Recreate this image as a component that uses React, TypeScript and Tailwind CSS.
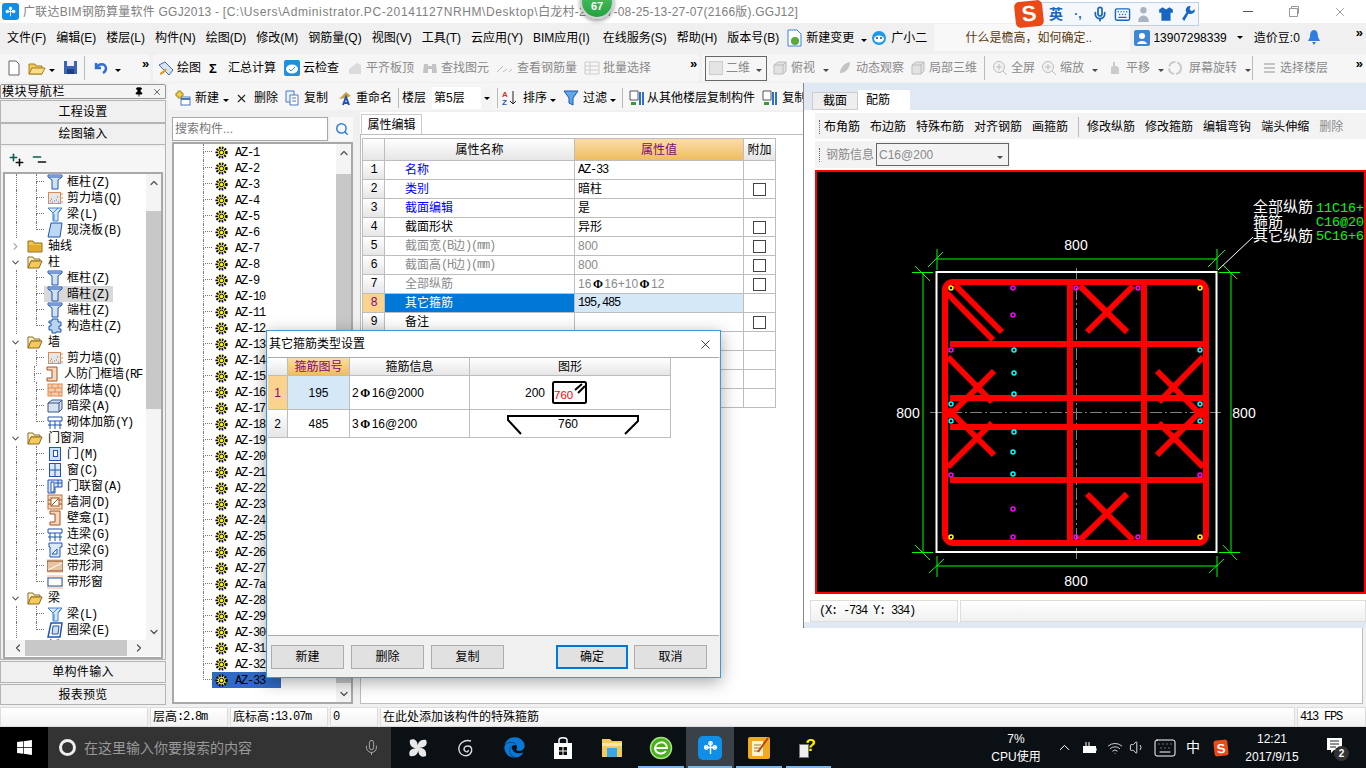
import type { ReactNode } from "react"
import { FaEdge, FaWindows } from "react-icons/fa"
import { ChevronDown, ChevronLeft, ChevronRight, ChevronUp, Keyboard, Mic, Minus, Pin, Plus, Search, Volume1, Wifi, X } from "lucide-react"

function Sim({ t }: { t: string }) {
  const parts = t.split(/([\x00-\x7f]+)/).filter(Boolean)
  return (
    <>
      {parts.map((p, i) =>
        /^[\x00-\x7f]+$/.test(p) ? (
          <span key={i} className="font-['Liberation_Mono'] tracking-[-1.2px]">{p}</span>
        ) : (
          <span key={i}>{p}</span>
        ),
      )}
    </>
  )
}

function Ico({ children, w = 16, h = 16 }: { children: ReactNode; w?: number; h?: number }) {
  return (
    <svg width={w} height={h} viewBox={`0 0 ${w} ${h}`} className="shrink-0">
      {children}
    </svg>
  )
}

function Tri() {
  return <span className="inline-block h-0 w-0 shrink-0 border-x-[3px] border-t-[3px] border-x-transparent border-t-black" />
}

function More({ className }: { className: string }) {
  return <span className={`text-[13px] leading-none font-bold text-black ${className}`}>»</span>
}

const blue = "#1f55b5"
const Column = () => <Ico><path d="M1 1h14v2l-4 3v9H5V6L1 3z" fill="#cfe2fa" stroke={blue} /><path d="M2 3h12" stroke={blue} /></Ico>
const Wall = () => <Ico><rect x="1.5" y="2.5" width="12" height="11" fill="#e6e6e6" stroke="#e08a50" /><path d="M4 9h1M7 11h1M10 7h1M5 12h1M9 10h1M11 12h1M3 11h1" stroke="#777" /><path d="M14 4h2M14 8h2M14 12h2" stroke="#e08a50" /></Ico>
const Beam = () => <Ico><path d="M1 2h14l-4 5v8H6V7z" fill="#d7e8fb" stroke="#3b83d9" /><path d="M11 2 6 7M14 3l-3 4M7 8v6" stroke="#3b83d9" /></Ico>
const Plate = () => <Ico><path d="M4 1h11l-2 14H1z" fill="#bcd8f5" stroke={blue} /></Ico>
const Struct = () => <Ico><path d="M5 1h6v3h3v4h-2v3h2v3H9v1H5v-3H2V8h2V5H2V3h3z" fill="#b9d3f3" stroke={blue} /></Ico>
const Niche = () => <Ico><path d="M3 1h10v14H3v-3h5V4H3z" fill="#f7d9bd" stroke="#a5501e" /></Ico>
const Brick = () => <Ico><rect x="1" y="2" width="14" height="12" fill="#f7cfae" stroke="#e08a50" /><path d="M1 6h14M1 10h14M5 2v4M11 2v4M8 6v4M4 10v4M12 10v4" stroke="#e08a50" /></Ico>
const Hidden = () => <Ico><path d="M1 5l4-3h10v9l-3 3H1z" fill="#d6e2ee" stroke="#37558a" /><path d="M1 5h11v9M12 5l3-3" stroke="#37558a" fill="none" /></Ico>
const Bars = () => <Ico><path d="M1 3h14v4H1z" fill="#fff" stroke={blue} /><path d="M3 7v8M8 7v8M13 7v8M1 11h14" stroke={blue} /></Ico>
const Door = () => <Ico><rect x="2.5" y="1.5" width="11" height="13" fill="#cfe2fa" stroke={blue} /><rect x="6.5" y="4.5" width="4" height="6" fill="#fff" stroke={blue} /></Ico>
const Win = () => <Ico><rect x="2.5" y="1.5" width="11" height="13" fill="#dbe9fb" stroke={blue} /><path d="M8 2v12M3 8h10" stroke={blue} /></Ico>
const DoorWin = () => <Ico><path d="M1 2h14v7H8v6H1z" fill="#dbe9fb" stroke={blue} /><path d="M4 4h3v10H4zM11 2v7M8 5h7" stroke={blue} fill="#fff" /></Ico>
const Hole = () => <Ico><rect x="1" y="1" width="14" height="14" fill="#f7d9bd" stroke="#c0703a" /><rect x="4" y="4" width="8" height="8" fill="#fff" stroke="#a5501e" /><path d="M4 12l8-8M1 6h3M12 6h3M1 10h3M12 10h3" stroke="#a5501e" /></Ico>
const Lintel = () => <Ico><path d="M2 1h13v4h-2v10H3V5H2z" fill="#dbe9fb" stroke={blue} /><path d="M5 12l5-5v5z" fill="#fff" stroke={blue} /></Ico>
const Strip = () => <Ico><rect x="0" y="1" width="16" height="14" fill="#f7d9bd" /><rect x="0" y="3" width="16" height="10" fill="#e8c3a3" stroke="#8a4a20" /><path d="M1 12 15 5" stroke="#fff" /></Ico>
const StripWin = () => <Ico><rect x="0" y="1" width="16" height="14" fill="#f9dcc8" /><rect x="1" y="4" width="14" height="8" fill="#fff" stroke={blue} /></Ico>
const RingBeam = () => <Ico><path d="M4 1h11l-2 14H1z" fill="#fff" stroke={blue} strokeWidth="1.5" /><path d="M6 4h6l-1 8H5z" fill="#cfe2fa" stroke={blue} /></Ico>
const FolderShut = () => <Ico><path d="M1 3h5l1 2h8v9H1z" fill="#f0c64d" stroke="#8d6d1e" /><path d="M2 7h12v6H2z" fill="#e2a92b" /></Ico>
const FolderOpen = () => <Ico><path d="M1 3h5l1 2h6v2H4l-3 7z" fill="#fff4cf" stroke="#8d6d1e" /><path d="M4 7h11l-3 7H1z" fill="#f3c95a" stroke="#8d6d1e" /></Ico>
const Gear = () => <Ico w={13} h={13}><circle cx="6.5" cy="6.5" r="4.8" fill="#ffff00" stroke="#000" strokeWidth="2.6" strokeDasharray="1.6 1.2" /><circle cx="6.5" cy="6.5" r="2.2" fill="#ffff00" stroke="#000" /></Ico>
const AppCross = ({ s = 11 }: { s?: number }) => (
  <svg width={s} height={s} viewBox="0 0 16 16" fill="none" stroke="#fff" strokeWidth="1.5">
    <path d="M8 1v14M1 8h14" /><circle cx="8" cy="3.5" r="1.8" /><circle cx="3.5" cy="8" r="1.8" /><circle cx="12.5" cy="8" r="1.8" />
  </svg>
)

type TreeRow = { t: string; icon?: ReactNode; folder?: "open" | "shut"; last?: boolean; sel?: boolean }
const tree: TreeRow[] = [
  { t: "框柱(Z)", icon: <Column /> },
  { t: "剪力墙(Q)", icon: <Wall /> },
  { t: "梁(L)", icon: <Beam /> },
  { t: "现浇板(B)", icon: <Plate />, last: true },
  { t: "轴线", folder: "shut" },
  { t: "柱", folder: "open" },
  { t: "框柱(Z)", icon: <Column /> },
  { t: "暗柱(Z)", icon: <Column />, sel: true },
  { t: "端柱(Z)", icon: <Column /> },
  { t: "构造柱(Z)", icon: <Struct />, last: true },
  { t: "墙", folder: "open" },
  { t: "剪力墙(Q)", icon: <Wall /> },
  { t: "人防门框墙(RF", icon: <Niche /> },
  { t: "砌体墙(Q)", icon: <Brick /> },
  { t: "暗梁(A)", icon: <Hidden /> },
  { t: "砌体加筋(Y)", icon: <Bars />, last: true },
  { t: "门窗洞", folder: "open" },
  { t: "门(M)", icon: <Door /> },
  { t: "窗(C)", icon: <Win /> },
  { t: "门联窗(A)", icon: <DoorWin /> },
  { t: "墙洞(D)", icon: <Hole /> },
  { t: "壁龛(I)", icon: <Niche /> },
  { t: "连梁(G)", icon: <Bars /> },
  { t: "过梁(G)", icon: <Lintel /> },
  { t: "带形洞", icon: <Strip /> },
  { t: "带形窗", icon: <StripWin />, last: true },
  { t: "梁", folder: "open" },
  { t: "梁(L)", icon: <Beam /> },
  { t: "圈梁(E)", icon: <RingBeam />, last: true },
  { t: "板", folder: "open" },
]

const azList = [
  "AZ-1", "AZ-2", "AZ-3", "AZ-4", "AZ-5", "AZ-6", "AZ-7", "AZ-8", "AZ-9", "AZ-10", "AZ-11", "AZ-12",
  "AZ-13", "AZ-14", "AZ-15", "AZ-16", "AZ-17", "AZ-18", "AZ-19", "AZ-20", "AZ-21", "AZ-22", "AZ-23",
  "AZ-24", "AZ-25", "AZ-26", "AZ-27", "AZ-7a", "AZ-28", "AZ-29", "AZ-30", "AZ-31", "AZ-32", "AZ-33",
]

function TitleBar() {
  return (
    <div className="flex h-[23px] shrink-0 items-center bg-white pl-[2px] text-[12px] text-[#808080]">
      <span className="flex h-[17px] w-[17px] items-center justify-center rounded-[3px] bg-[#0f8fe8]"><AppCross /></span>
      <span className="ml-[4px] whitespace-pre tracking-[0.22px]">广联达BIM钢筋算量软件 GGJ2013 - </span>
      <span className="whitespace-pre tracking-[0.6px]">[C:\Users\Administrator.PC-20141127NRHM\Desktop\</span>
      <span className="whitespace-pre tracking-[0.22px]">白龙村-2#017-08-25-13-27-07(2166版).GGJ12]</span>
      <svg width="11" height="11" viewBox="0 0 11 11" className="ml-auto mr-[34px]" stroke="#555" fill="none"><path d="M0 5.5h10" /></svg>
      <svg width="11" height="11" viewBox="0 0 11 11" className="mr-[34px]" stroke="#999" fill="none"><path d="M1.5 2.5h8v8h-8zM3.5 2.5v-2h7v7h-1" /></svg>
      <X size={14} strokeWidth={1} className="mr-[19px] text-[#555]" />
    </div>
  )
}

function MenuBar() {
  const items = ["文件(F)", "编辑(E)", "楼层(L)", "构件(N)", "绘图(D)", "修改(M)", "钢筋量(Q)", "视图(V)", "工具(T)", "云应用(Y)", "BIM应用(I)", "在线服务(S)", "帮助(H)", "版本号(B)"]
  return (
    <div className="flex h-[29px] shrink-0 items-center gap-[10px] bg-[#f0f0f0] pl-[7px] text-[12px]">
      {items.map((m) => <span key={m} className={`whitespace-nowrap ${m === "在线服务(S)" ? "ml-[3px]" : ""}`}>{m}</span>)}
      <span className="-ml-[2px] flex items-center gap-[4px]">
        <Ico w={15} h={18}><path d="M1 1h9l4 4v12H1z" fill="#fff" stroke="#3b83d9" /><circle cx="8" cy="12" r="4" fill="#58a83a" /></Ico>
        <span>新建变更</span>
      </span>
      <span className="-ml-[3px]"><Tri /></span>
      <span className="-ml-[6px] flex items-center gap-[4px]">
        <Ico><circle cx="8" cy="8" r="7" fill="#1b9ae8" /><ellipse cx="8" cy="9" rx="5" ry="3.4" fill="#fff" /><circle cx="6" cy="8" r="1" fill="#14a" /><circle cx="10" cy="8" r="1" fill="#14a" /></Ico>
        <span>广小二</span>
      </span>
      <span className="-ml-[3px] flex h-[27px] w-[196px] items-center rounded-t-[3px] bg-[#f8f8f8] pl-[31px] text-[#5a3a10]">什么是檐高，如何确定..</span>
      <span className="-ml-[6px] flex items-center gap-[3px]">
        <Ico><rect x="0" y="0" width="16" height="16" rx="2" fill="#3d86d6" /><circle cx="8" cy="6" r="3" fill="#fff" /><path d="M3 14c1-4 9-4 10 0z" fill="#fff" /></Ico>
        <span>13907298339</span>
      </span>
      <Tri />
      <span className="ml-[1px]">造价豆:0</span>
      <span className="-ml-[2px]">
        <Ico w={12} h={17}><path d="M6 1c3 0 4 3 4 7l2 4H0l2-4c0-4 1-7 4-7z" fill="#2f7fe0" /><path d="M4 13h4l-2 3z" fill="#2f7fe0" /></Ico>
      </span>
      <More className="ml-auto mr-[3px] -mt-[10px]" />
    </div>
  )
}

function Tool({ icon, label, gray, className = "", arrow }: { icon?: ReactNode; label: string; gray?: boolean; className?: string; arrow?: boolean }) {
  return (
    <span className={`flex items-center gap-[3px] whitespace-nowrap ${gray ? "text-[#8a8a8a]" : ""} ${className}`}>
      {icon && <span className={gray ? "opacity-45 grayscale" : ""}>{icon}</span>}
      <span>{label}</span>
      {arrow && <span className="ml-[5px] opacity-70"><Tri /></span>}
    </span>
  )
}

const Binoc = () => <Ico><path d="M2 4h4v9H1zM10 4h4l1 9h-5zM6 6h4v3H6z" fill="#888" /></Ico>
const Cube = () => <Ico><path d="M2 5l4-3h8v9l-3 3H2z" fill="#ccc" stroke="#777" /><path d="M2 5h9v9M11 5l3-3" stroke="#777" fill="none" /></Ico>
const Orbit = () => <Ico><path d="M3 13C3 7 8 3 13 2c0 6-4 11-10 11z" fill="#888" /></Ico>
const Magnify = () => <Ico><circle cx="7" cy="7" r="5.5" fill="#eee" stroke="#777" /><path d="M4 7h6M7 4v6M11 11l4 4" stroke="#777" /></Ico>

function ToolBar() {
  return (
    <div className="flex h-[31px] shrink-0 items-center bg-[#f0f0f0] pt-[1px]">
      <div className="flex h-[28px] w-[150px] items-center rounded-r-[4px] bg-[#f6f6f6] pl-[6px]">
        <Ico><path d="M3 1h7l3 3v11H3z" fill="#fff" stroke="#666" /></Ico>
        <span className="ml-[6px]"><Ico w={18}><path d="M1 4h6l1 2h6v8H1z" fill="#f3c95a" stroke="#a5801e" /><path d="M4 8h13l-3 6H1z" fill="#f8dd8c" stroke="#a5801e" /></Ico></span>
        <span className="ml-[3px]"><Tri /></span>
        <span className="ml-[8px]"><Ico w={15}><path d="M1 1h13v13H1z" fill="#3a64b8" /><path d="M4 1h7v5H4z" fill="#eef" /><path d="M4 9h7v5H4z" fill="#223e80" /></Ico></span>
        <span className="ml-[6px] h-[24px] w-px bg-[#bbb]" />
        <span className="ml-[8px]"><Ico><path d="M3 3v5h5M3 8c3-5 9-5 10 0 0 2-1 4-3 5" fill="none" stroke="#2f6fd0" strokeWidth="2.4" /></Ico></span>
        <span className="ml-[6px]"><Tri /></span>
        <More className="ml-[21px] -mt-[10px]" />
      </div>
      <div className="ml-[3px] flex h-[28px] w-[546px] items-center rounded-[4px] bg-[#f6f6f6] pl-[5px]">
        <Tool className="" label="绘图" icon={<Ico><path d="M1 5 7 2l8 8-4 5z" fill="#d8e4f4" stroke="#3b6fb5" /><path d="M2 14c3-1 5-3 6-5" stroke="#e0a020" strokeWidth="2" /></Ico>} />
        <Tool className="ml-[8px] gap-[7px]" label="汇总计算" icon={<span className="block w-[12px] text-[13px] leading-none font-bold">Σ</span>} />
        <Tool className="ml-[8px]" label="云检查" icon={<Ico><rect x="0" y="0" width="16" height="16" rx="2" fill="#1f8fe0" /><ellipse cx="8" cy="9" rx="6" ry="4.5" fill="#fff" /><path d="M5 9l2 2 4-4" stroke="#1f8fe0" fill="none" /></Ico>} />
        <Tool gray className="ml-[8px]" label="平齐板顶" icon={<Ico><path d="M2 9l8-6 4 2v9H2z" fill="#bbb" /></Ico>} />
        <Tool gray className="ml-[8px]" label="查找图元" icon={<Binoc />} />
        <Tool gray className="ml-[6px] " label="查看钢筋量" icon={<Ico w={19}><path d="M2 12 8 6M8 12l4-3M14 12l3-3" stroke="#777" /></Ico>} />
        <Tool gray className="ml-[7px]" label="批量选择" icon={<Ico><path d="M1 2h14v12H1zM1 6h14M1 10h14M6 2v12" fill="none" stroke="#999" /></Ico>} />
        <More className="ml-[39px] -mt-[10px]" />
      </div>
      <div className="ml-[3px] flex h-[28px] flex-1 items-center rounded-l-[4px] bg-[#f6f6f6] pl-[3px]">
        <span className="flex h-[25px] w-[62px] items-center border border-[#666] pl-[3px] text-[#8a8a8a]">
          <span className="h-[14px] w-[14px] border border-[#ccc] bg-[#e4e4e4]" />
          <span className="ml-[3px]">二维</span>
          <span className="ml-[6px] opacity-70"><Tri /></span>
        </span>
        <Tool gray className="ml-[5px]" label="俯视" arrow icon={<Cube />} />
        <Tool gray className="ml-[8px]" label="动态观察" icon={<Orbit />} />
        <Tool gray className="ml-[6px]" label="局部三维" icon={<Cube />} />
        <span className="ml-[7px] h-[24px] w-px bg-[#bbb]" />
        <Tool gray className="ml-[7px] " label="全屏" icon={<Magnify />} />
        <Tool gray className="ml-[6px]" label="缩放" arrow icon={<Magnify />} />
        <Tool gray className="ml-[9px]" label="平移" arrow icon={<Ico><path d="M4 14V7l2-1V2h2v4h2l2 2v6z" fill="#999" /></Ico>} />
        <Tool gray className="ml-[3px]" label="屏幕旋转" arrow icon={<span className="mr-[3px] block"><Ico><circle cx="8" cy="8" r="6" fill="none" stroke="#999" strokeWidth="2" strokeDasharray="8 2" /></Ico></span>} />
        <span className="ml-[1px] h-[24px] w-px bg-[#bbb]" />
        <Tool gray className="ml-[8px]" label="选择楼层" icon={<Ico><path d="M3 4h11M3 8h11M3 12h11" stroke="#888" strokeWidth="2" /></Ico>} />
        <More className="ml-auto mr-[3px] -mt-[10px]" />
      </div>
    </div>
  )
}

function NavButton({ label, className }: { label: string; className: string }) {
  return <div className={`flex items-center justify-center border border-[#b4b4b4] bg-[#f0f0f0] text-[12px] tracking-[0.3px] ${className}`}>{label}</div>
}

function TreeLine({ row }: { row: TreeRow }) {
  if (row.folder) {
    return (
      <div className="flex h-[16px] items-center pl-[5px]">
        {row.folder === "open"
          ? <ChevronDown size={11} strokeWidth={2.4} className="text-[#555]" />
          : <ChevronRight size={11} strokeWidth={2.4} className="text-[#aaa]" />}
        <span className="ml-[6px]">{row.folder === "open" ? <FolderOpen /> : <FolderShut />}</span>
        <span className="ml-[5px]">{row.t}</span>
      </div>
    )
  }
  return (
    <div className="flex h-[16px] items-center pl-[11px]">
      <span className="h-full w-[20px] border-l border-dotted border-[#777]" />
      <span className="flex h-full w-[8px] flex-col">
        <span className="h-[8px] border-b border-l border-dotted border-[#777]" />
        {!row.last && <span className="h-[8px] border-l border-dotted border-[#777]" />}
      </span>
      <span className={`flex h-full items-center gap-[4px] pr-[4px] pl-[3px] ${row.sel ? "bg-[#d9d9d9]" : ""}`}>
        {row.icon}
        <span className="whitespace-nowrap"><Sim t={row.t} /></span>
      </span>
    </div>
  )
}

function Sidebar() {
  return (
    <div className="flex h-full w-[166px] shrink-0 flex-col pt-[1px]">
      <div className="flex h-[15px] items-center rounded-t-[2px] border border-[#999] bg-[#f4f4f4] pl-[1px] text-[12px] tracking-[0.6px]">
        <span>模块导航栏</span>
        <Pin size={10} className="ml-auto" fill="#000" />
        <X size={10} strokeWidth={1.4} className="mr-[3px] ml-[8px]" />
      </div>
      <NavButton label="工程设置" className="mt-[1px] h-[23px]" />
      <NavButton label="绘图输入" className="h-[22px]" />
      <div className="flex h-[515px] flex-col border-x border-b border-[#b4b4b4] bg-[#f0f0f0] pt-[2px]">
        <div className="flex h-[25px] items-center gap-[6px] rounded-t-[3px] bg-[#f6f6f6] pl-[7px]">
          <span className="relative h-[16px] w-[17px]">
            <Plus size={11} strokeWidth={3.4} className="absolute top-0 left-0 text-[#0a5d50]" />
            <Plus size={11} strokeWidth={3.4} className="absolute right-0 bottom-0 text-[#111]" />
          </span>
          <span className="relative h-[17px] w-[17px]">
            <Minus size={12} strokeWidth={3.4} className="absolute top-0 left-0 text-[#0a5d50]" />
            <Minus size={12} strokeWidth={3.4} className="absolute right-0 bottom-0 text-[#111]" />
          </span>
        </div>
        <div className="mx-[2px] flex flex-1 flex-col border-2 border-[#a8a8a8] bg-white">
          <div className="flex h-[466px]">
            <div className="h-full flex-1 overflow-hidden text-[12px] leading-[16px]">
              {tree.map((r, i) => <TreeLine key={i} row={r} />)}
            </div>
            <div className="flex w-[15px] flex-col items-center bg-[#f4f4f4]">
              <ChevronUp size={12} strokeWidth={2.6} className="mt-[3px] text-[#555]" />
              <span className="mt-[22px] h-[198px] w-full bg-[#c8c8c8]" />
              <ChevronDown size={12} strokeWidth={2.6} className="mt-auto mb-[2px] text-[#555]" />
            </div>
          </div>
          <div className="flex h-[16px] items-center bg-[#f4f4f4] pl-[7px]">
            <ChevronLeft size={12} strokeWidth={2.6} className="text-[#555]" />
            <span className="ml-[1px] h-full w-[102px] bg-[#c8c8c8]" />
            <ChevronRight size={12} strokeWidth={2.6} className="ml-[6px] text-[#555]" />
          </div>
        </div>
      </div>
      <NavButton label="单构件输入" className="mt-[1px] h-[22px]" />
      <NavButton label="报表预览" className="mt-[1px] h-[21px]" />
    </div>
  )
}

function CenterToolbar() {
  return (
    <div className="flex h-[27px] shrink-0 items-center rounded-[3px] bg-[#f6f6f6] pt-[3px] pl-[7px] text-[12px]">
      <Tool className="gap-[4px]" label="新建" icon={<Ico><rect x="6" y="7" width="9" height="8" fill="#fff" stroke="#4a78c0" /><path d="M6 9h9" stroke="#4a78c0" strokeWidth="2" /><path d="M3 1h3v2h2v3H6v2H3V6H1V3h2z" fill="#f2d04c" stroke="#a88a20" /></Ico>} />
      <span className="ml-[4px]"><Tri /></span>
      <X size={13} strokeWidth={2} className="ml-[6px] text-[#222]" />
      <span className="ml-[6px]">删除</span>
      <Tool className="ml-[6px] gap-[4px]" label="复制" icon={<Ico><path d="M2 1h8v11H2z" fill="#e8f0fb" stroke="#4a78c0" /><path d="M6 5h8v10H6z" fill="#fff" stroke="#4a78c0" /><path d="M8 8h4M8 11h4" stroke="#4a78c0" /></Ico>} />
      <Tool className="ml-[8px] gap-[4px]" label="重命名" icon={<Ico><path d="M3 9 10 2l5 4-5 2z" fill="#d0a040" /><path d="M7 15l3-8 3 8M8 13h4" stroke="#1f55b5" fill="none" strokeWidth="2" /></Ico>} />
      <span className="ml-[6px] h-[20px] w-px bg-[#bbb]" />
      <span className="ml-[3px]">楼层</span>
      <span className="ml-[6px] flex h-[22px] w-[61px] items-center bg-white pl-[2px]">第5层<span className="ml-auto flex h-full w-[12px] items-center justify-center bg-[#f4f4f4]"><Tri /></span></span>
      <span className="ml-[4px] h-[20px] w-px bg-[#bbb]" />
      <Tool className="ml-[4px] gap-[5px]" label="排序" icon={<Ico><text x="0" y="7" fontSize="8" fontWeight="700" fill="#c33">A</text><text x="0" y="15" fontSize="8" fontWeight="700" fill="#1f55b5">Z</text><path d="M11 1v13M8 11l3 3 3-3" stroke="#222" fill="none" /></Ico>} />
      <span className="ml-[3px]"><Tri /></span>
      <Tool className="ml-[7px] gap-[4px]" label="过滤" icon={<Ico><path d="M1 1h14L10 8v7l-4-2V8z" fill="#5fa8e8" stroke="#1f55b5" /></Ico>} />
      <span className="ml-[3px]"><Tri /></span>
      <span className="ml-[6px] h-[20px] w-px bg-[#bbb]" />
      <Tool className="ml-[5px] gap-[3px]" label="从其他楼层复制构件" icon={<Ico><path d="M2 1h8v9H2z" fill="#fff" stroke="#555" /><path d="M3 12h5v3H3z" fill="#3a9a3a" /><path d="M12 2v13M15 2v13" stroke="#2f6fd0" strokeWidth="2" /></Ico>} />
      <Tool className="ml-[6px] gap-[5px]" label="复制" icon={<Ico><path d="M2 1h8v9H2z" fill="#fff" stroke="#555" /><path d="M3 12h5v3H3z" fill="#3a9a3a" /><path d="M12 2v13M15 2v13" stroke="#2f6fd0" strokeWidth="2" /></Ico>} />
    </div>
  )
}

function ListColumn() {
  return (
    <div className="ml-[4px] flex h-full w-[181px] shrink-0 flex-col pt-[7px]">
      <div className="flex h-[25px] shrink-0 gap-[2px]">
        <div className="flex h-[24px] w-[156px] items-center border border-[#a8a8a8] bg-white pl-[2px] text-[12px] text-[#777]">搜索构件...</div>
        <div className="flex h-[24px] w-[23px] items-center justify-center bg-[#f8f8f8]"><Search size={14} strokeWidth={2.5} className="text-[#2f7fd8]" /></div>
      </div>
      <div className="flex h-[562px] border-2 border-[#a8a8a8] bg-white">
        <div className="flex-1 overflow-hidden text-[12px] leading-[16px]">
          {azList.map((a, i) => (
            <div key={a} className="flex h-[16px] items-center pl-[29px]">
              <span className="flex h-full w-[9px] flex-col">
                <span className="h-[8px] border-b border-l border-dotted border-[#777]" />
                {i < azList.length - 1 && <span className="h-[8px] border-l border-dotted border-[#777]" />}
              </span>
              <span className={`flex h-full items-center gap-[7px] pr-[16px] pl-[3px] ${a === "AZ-33" ? "bg-[#316ac5]" : ""}`}>
                <Gear />
                <span className="whitespace-nowrap"><Sim t={a} /></span>
              </span>
            </div>
          ))}
        </div>
        <div className="flex w-[15px] flex-col items-center bg-[#f4f4f4]">
          <ChevronUp size={12} strokeWidth={2.6} className="mt-[3px] text-[#555]" />
          <span className="mt-[15px] h-[509px] w-full bg-[#c8c8c8]" />
          <ChevronDown size={12} strokeWidth={2.6} className="mt-auto mb-[2px] text-[#555]" />
        </div>
      </div>
    </div>
  )
}

const gridLine = "border-r border-b border-[#bdbdbd]"
const headGrad = "bg-gradient-to-b from-white to-[#e6e6e6]"
const orangeGrad = "bg-gradient-to-b from-[#fbdca6] to-[#f0bd5e] text-[#800a7a]"

function Hrb() {
  return <span className="inline-block w-[13px] text-center font-['Liberation_Serif'] text-[12px] font-bold text-black">Φ</span>
}

function CheckBox() {
  return <span className="h-[13px] w-[13px] border border-[#444] bg-white" />
}

function PropRow({ n, name, value, color = "text-black", check, sel, valueClass = "" }: { n?: number; name?: string; value?: ReactNode; color?: string; check?: boolean; sel?: boolean; valueClass?: string }) {
  return (
    <div className="flex h-[19px] text-[12px]">
      <div className={`flex w-[22px] items-center justify-center ${gridLine} ${sel ? "bg-[#fbd38d] text-[#800a7a]" : headGrad}`}><Sim t={n ? String(n) : ""} /></div>
      <div className={`flex w-[190px] items-center pl-[20px] ${gridLine} ${sel ? "bg-[#0078d7] text-white" : color}`}><Sim t={name ?? ""} /></div>
      <div className={`flex w-[169px] items-center pl-[3px] ${gridLine} ${sel ? "bg-[#d5e8f8]" : ""} ${valueClass}`}>{value}</div>
      <div className={`flex w-[32px] items-center justify-center ${gridLine}`}>{check && <CheckBox />}</div>
    </div>
  )
}

function PropsPanel() {
  return (
    <div className="ml-[7px] flex min-w-0 flex-1 flex-col pt-[2px] pr-[3px]">
      <div className="flex h-[22px] shrink-0 items-end bg-white pl-[1px]">
        <span className="flex h-[20px] w-[61px] items-center justify-center border-x border-t border-[#ccc] bg-white text-[12px]">属性编辑</span>
      </div>
      <div className="h-[570px] border border-[#bdbdbd] bg-white pt-[3px] pl-[1px]">
        <div className="w-[414px] border-t border-l border-[#bdbdbd]">
          <div className="flex h-[22px] text-[12px]">
            <div className={`w-[22px] ${gridLine} ${headGrad}`} />
            <div className={`flex w-[190px] items-center justify-center ${gridLine} ${headGrad}`}>属性名称</div>
            <div className={`flex w-[169px] items-center justify-center ${gridLine} ${orangeGrad}`}>属性值</div>
            <div className={`flex w-[32px] items-center justify-center ${gridLine} ${headGrad}`}>附加</div>
          </div>
          <PropRow n={1} name="名称" color="text-[#0000ff]" value={<Sim t="AZ-33" />} />
          <PropRow n={2} name="类别" color="text-[#0000ff]" value="暗柱" check />
          <PropRow n={3} name="截面编辑" color="text-[#0000ff]" value="是" />
          <PropRow n={4} name="截面形状" value="异形" check />
          <PropRow n={5} name="截面宽(B边)(mm)" color="text-[#8a8a8a]" value="800" valueClass="text-[#8a8a8a]" check />
          <PropRow n={6} name="截面高(H边)(mm)" color="text-[#8a8a8a]" value="800" valueClass="text-[#8a8a8a]" check />
          <PropRow n={7} name="全部纵筋" color="text-[#8a8a8a]" valueClass="text-[#8a8a8a]" value={<>16<Hrb />16+10<Hrb />12</>} check />
          <PropRow n={8} name="其它箍筋" sel value={<Sim t="195,485" />} />
          <PropRow n={9} name="备注" check />
          <PropRow />
          <PropRow />
          <PropRow />
          <PropRow />
        </div>
      </div>
    </div>
  )
}

function Dialog() {
  const cell = "border-r border-b border-[#bdbdbd]"
  return (
    <div className="absolute top-[330px] left-[266px] flex h-[348px] w-[455px] flex-col border border-[#3a9ae0] bg-[#f0f0f0] shadow-[0_4px_16px_rgba(0,0,0,0.35)]">
      <div className="flex h-[26px] items-center bg-white pl-[2px] text-[12px]">
        <span>其它箍筋类型设置</span>
        <X size={15} strokeWidth={1.2} className="mr-[7px] ml-auto" />
      </div>
      <div className="mx-[1px] h-[279px] border-y border-[#aaa] bg-white">
        <div className="flex h-[18px] text-[12px]">
          <div className={`w-[20px] ${cell} ${headGrad}`} />
          <div className={`flex w-[62px] items-center justify-center ${cell} ${orangeGrad}`}>箍筋图号</div>
          <div className={`flex w-[120px] items-center justify-center ${cell} ${headGrad}`}>箍筋信息</div>
          <div className={`flex w-[201px] items-center justify-center ${cell} ${headGrad}`}>图形</div>
        </div>
        <div className="flex h-[34px] text-[12px]">
          <div className={`flex w-[20px] items-center justify-center bg-[#fbd38d] text-[#800a7a] ${cell}`}>1</div>
          <div className={`flex w-[62px] items-center justify-center bg-[#d5e8f8] ${cell}`}>195</div>
          <div className={`flex w-[120px] items-center pl-[2px] ${cell}`}>2<Hrb />16@2000</div>
          <div className={`flex w-[201px] items-center pl-[55px] ${cell}`}>
            <span>200</span>
            <svg width="36" height="24" viewBox="0 0 36 24" className="ml-[7px]">
              <rect x="1" y="1" width="33" height="21" rx="1.5" fill="none" stroke="#000" strokeWidth="2" />
              <path d="M23 9l7-6M26 12l7-7" stroke="#000" strokeWidth="2" />
              <text x="2" y="18" fontSize="11.5" fill="#f00">760</text>
            </svg>
          </div>
        </div>
        <div className="flex h-[28px] text-[12px]">
          <div className={`flex w-[20px] items-center justify-center ${cell} ${headGrad}`}>2</div>
          <div className={`flex w-[62px] items-center justify-center ${cell}`}>485</div>
          <div className={`flex w-[120px] items-center pl-[2px] ${cell}`}>3<Hrb />16@200</div>
          <div className={`flex w-[201px] items-center justify-center ${cell}`}>
            <svg width="134" height="24" viewBox="0 0 134 24" className="ml-[6px]">
              <path d="M15 22 2 8V4h130v5l-13 13" fill="none" stroke="#000" strokeWidth="2" />
              <text x="62" y="16" fontSize="12" textAnchor="middle">760</text>
            </svg>
          </div>
        </div>
      </div>
      <div className="flex flex-1 items-center pl-[4px] text-[12px]">
        <button className="h-[24px] w-[73px] border border-[#adadad] bg-[#e1e1e1]">新建</button>
        <button className="ml-[7px] h-[24px] w-[73px] border border-[#adadad] bg-[#e1e1e1]">删除</button>
        <button className="ml-[7px] h-[24px] w-[73px] border border-[#adadad] bg-[#e1e1e1]">复制</button>
        <button className="ml-[52px] h-[24px] w-[72px] border-2 border-[#0078d7] bg-[#e1e1e1]">确定</button>
        <button className="ml-[6px] h-[24px] w-[73px] border border-[#adadad] bg-[#e1e1e1]">取消</button>
      </div>
    </div>
  )
}

const dots: [number, number, string][] = [
  [951, 288, "#ffff00"], [1200, 288, "#ffff00"], [951, 537, "#ffff00"], [1200, 537, "#ffff00"],
  [1013, 288, "#ff00ff"], [1013, 315, "#ff00ff"], [1076, 288, "#ff00ff"], [1138, 288, "#ff00ff"],
  [951, 350, "#ff00ff"], [1013, 509, "#ff00ff"], [1013, 537, "#ff00ff"], [1076, 537, "#ff00ff"],
  [1138, 537, "#ff00ff"], [951, 475, "#ff00ff"], [1200, 475, "#ff00ff"],
  [1014, 350, "#00ffff"], [1014, 373, "#00ffff"], [1014, 394, "#00ffff"], [1014, 432, "#00ffff"],
  [1013, 452, "#00ffff"], [1013, 474, "#00ffff"], [1200, 350, "#00ffff"], [951, 404, "#00ffff"],
  [1200, 404, "#00ffff"], [951, 421, "#00ffff"], [1200, 421, "#00ffff"],
]

const redLines = [
  "M950 344H1203", "M950 398H1203", "M950 427H1203", "M950 480H1203",
  "M1070 282V543", "M1144 282V543",
  "M955 285 1002 332", "M947 293 993 340",
  "M1080 286 1127 332", "M1133 286 1087 332",
  "M1087 494 1133 540", "M1127 494 1080 540",
  "M948 357 992 402", "M994 371 948 417", "M948 467 992 423", "M994 455 948 409",
  "M1203 357 1159 402", "M1157 371 1203 417", "M1203 467 1159 423", "M1157 455 1203 409",
]

const greenLines = [
  "M937 259H1217", "M937 249V270", "M928 267 943 252", "M1217 249V270", "M1208 267 1225 250",
  "M923 272V552", "M912 272.5H933", "M915 266 930 281", "M912 552.5H933", "M915 545 930 560",
  "M1231 272V552", "M1219 272.5H1240", "M1223 265 1237 279", "M1219 552.5H1240", "M1223 545 1237 560",
  "M937 566H1217", "M937 556V577", "M929 573 944 559", "M1217 556V577", "M1209 573 1224 559",
]

function Drawing() {
  return (
    <div className="h-[424px] w-[551px] border-2 border-[#ff0000] bg-black">
      <svg viewBox="817 172 547 420" width="547" height="420" className="block">
        <path d="M1076.5 268V559" stroke="#808080" strokeDasharray="12 3 2 3" />
        <path d="M930 412.5H1221" stroke="#808080" strokeDasharray="12 3 2 3" />
        <rect x="936.5" y="272" width="280" height="280" fill="none" stroke="#fff" strokeWidth="2" />
        <g fill="none" stroke="#ff0000" strokeWidth="6">
          <rect x="945" y="282" width="261" height="261" rx="8" />
          {redLines.map((d) => <path key={d} d={d} />)}
        </g>
        <g fill="none" stroke="#00ff00">
          {greenLines.map((d) => <path key={d} d={d} />)}
        </g>
        <path d="M1218 270 1253 237" stroke="#fff" />
        {dots.map(([x, y, c]) => <circle key={`${x}-${y}`} cx={x} cy={y} r="2" fill="none" stroke={c} strokeWidth="1.5" />)}
        <g fill="#fff" fontSize="14" textAnchor="middle" fontFamily="Liberation Sans">
          <text x="1076" y="250">800</text>
          <text x="1076" y="586">800</text>
          <text x="908" y="418">800</text>
          <text x="1244" y="418">800</text>
        </g>
        <g fill="#fff" fontSize="15" fontFamily="Noto Sans CJK SC">
          <text x="1253" y="212">全部纵筋</text>
          <text x="1253" y="227">箍筋</text>
          <text x="1253" y="241">其它纵筋</text>
        </g>
        <g fill="#00ff00" fontSize="13.33" fontFamily="Liberation Mono">
          <text x="1316" y="212">11C16+10C12</text>
          <text x="1316" y="226">C16@200</text>
          <text x="1316" y="240">5C16+6C12</text>
        </g>
      </svg>
    </div>
  )
}

function SectionWindow() {
  const tools = "flex items-center whitespace-nowrap"
  return (
    <div className="absolute top-[83px] left-[803px] flex h-[545px] w-[563px] flex-col border-b border-l border-b-[#555] border-l-[#888] bg-[#dfe8f3] pt-[7px]">
      <div className="flex h-[20px] shrink-0 items-end pl-[8px] text-[12px]">
        <span className="flex h-[18px] w-[46px] items-center justify-center border border-[#ccc] bg-[#eee]">截面</span>
        <span className="flex h-[20px] w-[52px] items-center bg-white pl-[8px]">配筋</span>
      </div>
      <div className="flex flex-1 flex-col bg-white pt-[3px] pl-[11px] text-[12px]">
        <div className={`${tools} h-[26px] gap-[10px] bg-[#f3f3f3] pt-[2px] pl-[7px]`}>
          <span className="-mr-[6px] -ml-[3px] h-[14px] w-px border-l border-dotted border-[#666]" />
          <span>布角筋</span><span>布边筋</span><span>特殊布筋</span><span>对齐钢筋</span><span>画箍筋</span>
          <span className="h-[20px] w-px bg-[#bbb]" />
          <span className="-ml-[2px]">修改纵筋</span><span>修改箍筋</span><span>编辑弯钩</span><span>端头伸缩</span>
          <span className="text-[#8a8a8a]">删除</span>
        </div>
        <div className={`${tools} mt-[2px] h-[27px] w-[195px] bg-[#f3f3f3] pl-[4px]`}>
          <span className="h-[14px] w-px border-l border-dotted border-[#666]" />
          <span className="ml-[6px] text-[#8a8a8a]">钢筋信息</span>
          <span className="ml-[2px] flex h-[23px] w-[133px] items-center border border-[#666] pl-[2px] text-[#8a8a8a]">C16@200<span className="mr-[5px] ml-auto opacity-70"><Tri /></span></span>
        </div>
        <div className="mt-[2px]"><Drawing /></div>
        <div className="mt-[6px] -ml-[5px] flex h-[22px] gap-[2px] pr-0">
          <div className="flex w-[148px] items-center border border-[#ddd] bg-gradient-to-b from-white to-[#f0f0f0] pl-[8px]"><Sim t="(X: -734 Y: 334)" /></div>
          <div className="flex-1 border border-[#ddd] bg-gradient-to-b from-white to-[#f0f0f0]" />
        </div>
        <div className="-ml-[11px] h-[6px] bg-[#dfe8f3]" />
      </div>
    </div>
  )
}

function StatusBar() {
  const cell = "flex items-center border border-[#ddd] bg-gradient-to-b from-white to-[#f2f2f2] pl-[2px]"
  return (
    <div className="flex h-[20px] shrink-0 gap-[2px] bg-[#f0f0f0] text-[12px]">
      <div className={`${cell} w-[148px]`} />
      <div className={`${cell} w-[78px]`}><Sim t="层高:2.8m" /></div>
      <div className={`${cell} w-[98px]`}><Sim t="底标高:13.07m" /></div>
      <div className={`${cell} w-[48px]`}><Sim t="0" /></div>
      <div className={`${cell} flex-1`}>在此处添加该构件的特殊箍筋</div>
      <div className={`${cell} w-[69px]`}><Sim t="413 FPS" /></div>
    </div>
  )
}

function TaskSlot({ children, className = "", on }: { children: ReactNode; className?: string; on?: boolean }) {
  return (
    <div className={`relative flex h-full shrink-0 items-center justify-center ${className}`}>
      {children}
      {on && <span className="absolute right-[2px] bottom-0 left-[2px] h-[2px] bg-[#76b9ed]" />}
    </div>
  )
}

function TaskBar() {
  return (
    <div className="flex h-[41px] shrink-0 items-center bg-[#0b1014] text-white">
      <div className="flex h-full w-[48px] shrink-0 items-center justify-center bg-black"><FaWindows size={17} /></div>
      <div className="flex h-full w-[343px] shrink-0 items-center bg-[#333333] pl-[11px]">
        <span className="h-[17px] w-[17px] rounded-full border-[3px] border-[#eee]" />
        <span className="ml-[8px] text-[14px] leading-none text-[#999]">在这里输入你要搜索的内容</span>
        <Mic size={17} strokeWidth={1.2} className="mr-[11px] ml-auto text-[#bbb]" />
      </div>
      <div className="flex h-full shrink-0">
        <TaskSlot className="ml-[3px] w-[48px]">
          <svg width="22" height="22" viewBox="0 0 22 22" fill="#e8e8e8"><path d="M11 11C5 12 2 8 3 3c4-2 8 0 8 8zM11 11c-1-6 3-9 8-8 2 4 0 8-8 8zM11 11c6-1 9 3 8 8-4 2-8 0-8-8zM11 11c1 6-3 9-8 8-2-4 0-8 8-8z" /></svg>
        </TaskSlot>
        <TaskSlot className="w-[48px]">
          <svg width="20" height="20" viewBox="0 0 20 20" fill="none" stroke="#ddd" strokeWidth="1.4"><path d="M15 3C8 1 2 6 3 12s8 7 11 4 2-8-2-8-5 3-3 5 4 0 3-1" /></svg>
        </TaskSlot>
        <TaskSlot className="w-[49px]"><FaEdge size={21} className="text-[#0a78d7]" /></TaskSlot>
        <TaskSlot className="w-[48px]">
          <svg width="20" height="22" viewBox="0 0 20 22"><path d="M1 6h18v16H1z" fill="#fff" /><path d="M6 6V3c0-3 8-3 8 0v3" fill="none" stroke="#fff" strokeWidth="1.5" /><path d="M6 10h3.5v3.5H6zM10.5 10H14v3.5h-3.5zM6 14.5h3.5V18H6zM10.5 14.5H14V18h-3.5z" fill="#111" /></svg>
        </TaskSlot>
        <TaskSlot className="w-[49px]">
          <svg width="22" height="20" viewBox="0 0 22 20"><path d="M1 1h8l2 2h10v16H1z" fill="#f4c95d" /><path d="M6 10h10v9H6z" fill="#36a9e1" /><path d="M1 5h20v3H1z" fill="#fbe6a5" /></svg>
        </TaskSlot>
        <TaskSlot className="w-[50px]" on>
          <svg width="24" height="24" viewBox="0 0 24 24"><circle cx="12" cy="12" r="10.5" fill="#46b11c" stroke="#a8e080" strokeWidth="1.5" /><path d="M6 12h12c0-8-11-7-12 0 0 6 8 7 11 3" fill="none" stroke="#fff" strokeWidth="2" /></svg>
        </TaskSlot>
        <TaskSlot className="w-[48px] bg-[#3b4148]" on>
          <span className="flex h-[24px] w-[24px] items-center justify-center rounded-[5px] bg-[#0f8fe8]"><AppCross s={15} /></span>
        </TaskSlot>
        <TaskSlot className="w-[50px]" on>
          <svg width="24" height="24" viewBox="0 0 24 24"><rect x="1" y="1" width="22" height="22" rx="2" fill="#f2a922" /><path d="M5 5h11v15H5z" fill="#fdf2cf" /><path d="M7 9h7M7 12h7M7 15h5" stroke="#a07a30" /><path d="M21 2 11 16" stroke="#b5451a" strokeWidth="2" /></svg>
        </TaskSlot>
        <TaskSlot className="w-[49px]" on>
          <span className="relative h-[24px] w-[20px]">
            <span className="absolute bottom-[2px] left-0 h-[14px] w-[10px] border border-[#777] bg-[#eee]" />
            <span className="absolute -top-[2px] left-[7px] text-[17px] leading-[24px] font-bold text-[#ffee00]">?</span>
          </span>
        </TaskSlot>
      </div>
      <div className="ml-[155px] flex w-[56px] shrink-0 flex-col items-center text-[12px] leading-[18px]">
        <span>7%</span>
        <span className="whitespace-nowrap">CPU使用</span>
      </div>
      <ChevronUp size={17} strokeWidth={1.4} className="ml-[12px] shrink-0" />
      <svg width="16" height="14" viewBox="0 0 16 14" fill="none" stroke="#fff" className="ml-[9px] shrink-0"><rect x="1.5" y="5.5" width="12" height="6" fill="#fff" /><path d="M14 7v3M4 1v4M7 1v4" /></svg>
      <Wifi size={16} strokeWidth={1.2} className="ml-[9px] shrink-0" />
      <Volume1 size={17} strokeWidth={1.2} className="ml-[6px] shrink-0" />
      <Keyboard size={24} strokeWidth={1} className="ml-[7px] shrink-0" />
      <span className="ml-[9px] shrink-0 text-[14px]">中</span>
      <span className="ml-[14px] flex h-[16px] w-[14px] shrink-0 -rotate-6 items-center justify-center rounded-[3px] bg-[#ea4a16] text-[13px] leading-none font-bold text-white">S</span>
      <div className="ml-[10px] flex w-[68px] shrink-0 flex-col items-center text-[12px] leading-[18px]">
        <span>12:21</span>
        <span>2017/9/15</span>
      </div>
      <div className="relative ml-[17px] h-[24px] w-[24px] shrink-0">
        <svg width="18" height="18" viewBox="0 0 18 18" className="absolute top-[1px] left-[3px]"><path d="M1 1h15v12H8l-3 3v-3H1z" fill="#fff" /><path d="M4 4h9M4 7h9M4 10h6" stroke="#222" /></svg>
        <span className="absolute -right-[2px] -bottom-[1px] flex h-[15px] w-[15px] items-center justify-center rounded-full bg-[#333] text-[10px] font-bold">2</span>
      </div>
    </div>
  )
}

function SogouBar() {
  const slot = "flex w-[22px] shrink-0 items-center justify-center"
  return (
    <div className="absolute top-[1px] left-[1015px] flex h-[26px] items-center">
      <span className="z-10 flex h-[26px] w-[28px] -rotate-6 items-center justify-center rounded-[5px] bg-[#ea4a16] text-[22px] leading-none font-bold text-white">S</span>
      <div className="-ml-[4px] flex h-[24px] w-[160px] items-center border border-[#bcd0e6] bg-[#f4f8fd] pl-[5px] text-[#1766c4]">
        <span className={`${slot} text-[14px] font-bold`}>英</span>
        <span className={`${slot} text-[12px] leading-none font-bold`}>·,</span>
        <span className={slot}><Mic size={16} strokeWidth={2.6} /></span>
        <span className={slot}><Keyboard size={17} strokeWidth={2} /></span>
        <span className={slot}><svg width="15" height="17" viewBox="0 0 14 16" fill="#aab4c0"><circle cx="6" cy="4" r="3" /><path d="M1 15c0-8 10-8 10 0z" /></svg></span>
        <span className={slot}><svg width="16" height="16" viewBox="0 0 14 14" fill="#1766c4"><path d="M4 1 1 3v3h2v7h8V6h2V3l-3-2-3 2z" /></svg></span>
        <span className={slot}><svg width="15" height="17" viewBox="0 0 14 16" fill="#1766c4"><path d="M13 3a4 4 0 0 1-6 4l-4 7-2-2 4-6a4 4 0 0 1 4-6L8 3l2 2z" /></svg></span>
      </div>
    </div>
  )
}

function Badge() {
  return (
    <div className="absolute -top-[15px] left-[580px] flex h-[34px] w-[34px] items-end justify-center rounded-full border-2 border-[#d0d0d0] bg-gradient-to-b from-[#55c76a] to-[#1fa23e] pb-[5px] text-[11px] leading-none font-bold text-white shadow-[0_2px_4px_rgba(0,0,0,0.4)]">
      67
    </div>
  )
}

export default function App() {
  return (
    <div className="relative flex h-[768px] w-[1366px] flex-col overflow-hidden bg-[#f0f0f0] font-['Liberation_Sans','Noto_Sans_CJK_SC',sans-serif] text-[12px] text-black">
      <TitleBar />
      <MenuBar />
      <ToolBar />
      <div className="flex h-[624px] shrink-0">
        <Sidebar />
        <div className="ml-[2px] flex min-w-0 flex-1 flex-col">
          <CenterToolbar />
          <div className="flex min-h-0 flex-1">
            <ListColumn />
            <PropsPanel />
          </div>
        </div>
      </div>
      <StatusBar />
      <TaskBar />
      <SectionWindow />
      <Dialog />
      <SogouBar />
      <Badge />
    </div>
  )
}
